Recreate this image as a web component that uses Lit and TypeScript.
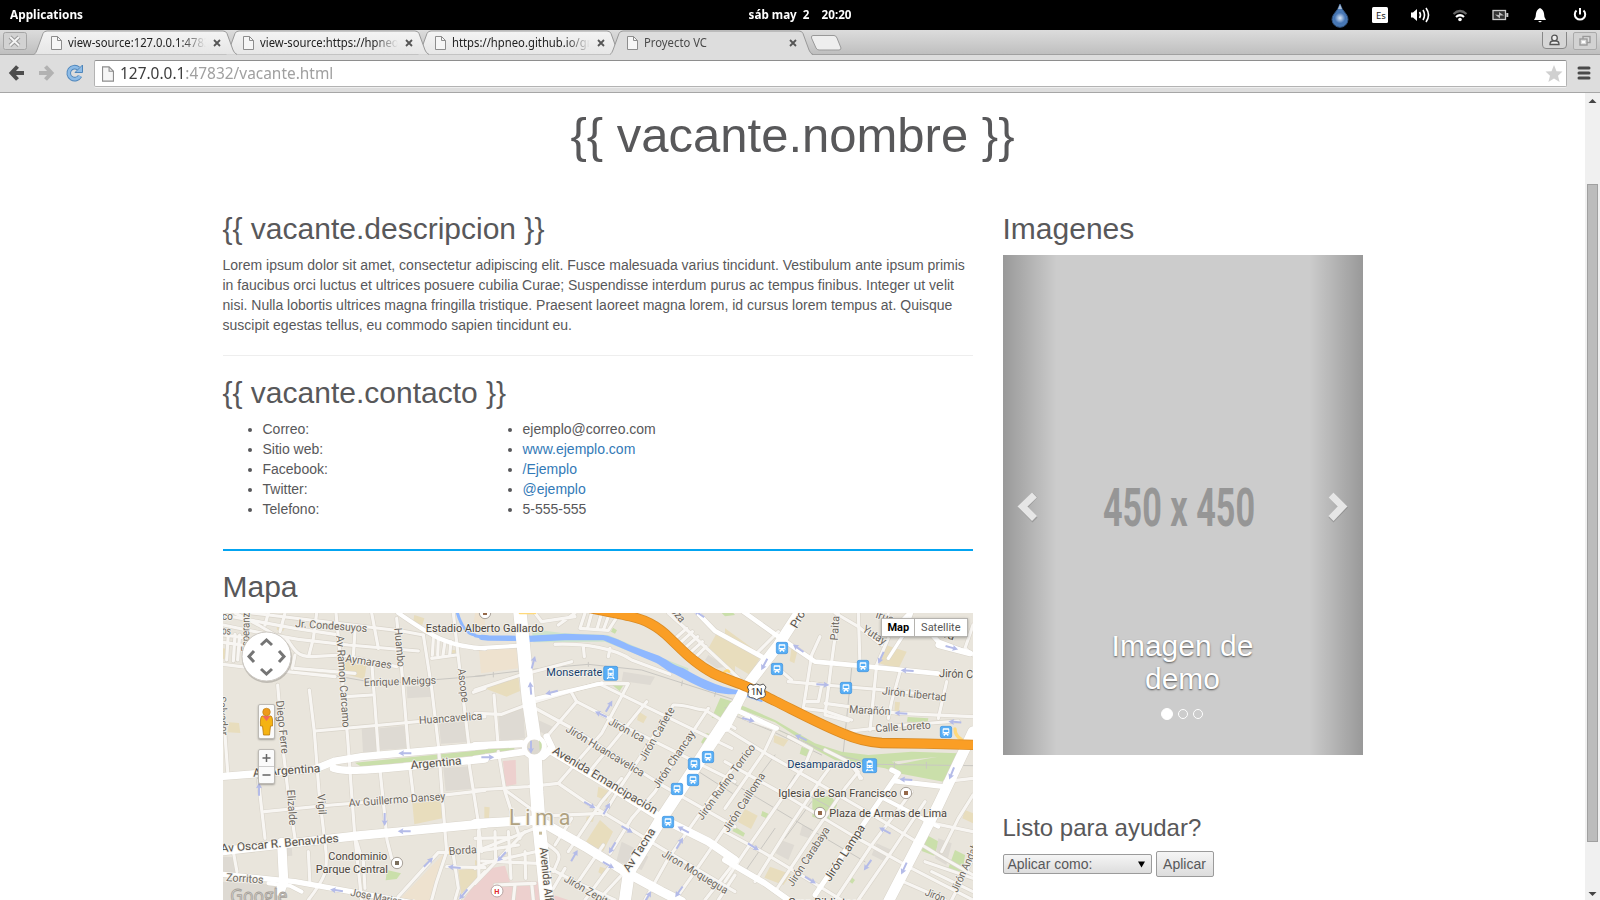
import { LitElement, html, svg, css } from "lit";
import { customElement } from "lit/decorators.js";

/* ---------- map data: three horizontal sections sharing one scale ---------- */
const OFF: Record<string, number> = { a: -24, b: 756, c: 1506 };
type Line = [string, string, number?];

const areas: [string, string, string][] = [
  ["a", "#dedad3", "M575,245 L648,240 L652,275 L577,280Z M440,370 L482,368 L486,440 L444,442Z M492,370 L568,362 L574,430 L496,435Z M672,355 L748,348 L755,412 L678,416Z M685,490 L760,484 L768,552 L692,558Z M24,755 L60,757 L66,806 L24,800Z M24,830 L200,840 L200,885 L24,885Z M205,720 L230,718 L232,752 L207,754Z"],
  ["a", "#e8ddbd", "M383,165 L455,180 L448,222 L378,205Z M42,352 L72,354 L76,384 L38,382Z M592,595 L680,585 L682,640 L598,658Z M24,130 L36,132 L36,160 L24,162Z M598,30 L628,40 L622,60 L594,52Z M185,62 L210,66 L205,78 L186,75Z M730,795 L785,790 L786,830 L740,880Z M708,134 L722,136 L722,150 L708,148Z"],
  ["a", "#eee2cf", "M687,745 L665,830 L645,885 L552,885 L600,835Z M780,24 L810,24 L810,90 L775,60Z"],
  ["a", "#cadfaa", "M420,473 L810,434 L810,449 L440,486Z M516,795 L558,805 L545,822 L512,826Z"],
  ["a", "#edd0ce", "M810,815 L770,850 L745,885 L810,885Z"],
  ["b", "#eee2cf", "M12,135 L124,130 L130,190 L18,205Z"],
  ["b", "#e8ddbd", "M28,250 L130,215 L135,258 L95,275Z M375,645 L414,680 L385,738 L332,712Z M335,635 L358,630 L354,650 L333,652Z M370,545 L408,560 L395,588 L366,575Z M28,605 L44,607 L42,640 L28,640Z M725,85 L780,110 L780,210 L700,130Z M492,320 L516,335 L505,355 L486,345Z M375,785 L398,792 L388,812 L370,802Z M0,765 L12,770 L8,835 L0,840Z"],
  ["b", "#dedad3", "M70,335 L145,310 L150,400 L76,408Z M190,345 L240,368 L222,395 L192,378Z M440,710 L480,730 L520,755 L500,795 L424,768Z M445,200 L540,215 L526,240 L440,228Z M700,150 L755,185 L725,190 L690,165Z"],
  ["b", "#edd0ce", "M84,468 L122,465 L124,538 L90,544Z M45,790 L90,782 L105,830 L190,830 L205,885 L0,885 L0,835Z M235,870 L280,885 L235,885Z"],
  ["b", "#cadfaa", "M412,240 L448,236 L434,258Z M736,278 L775,290 L745,345 L710,338Z M695,384 L710,390 L690,422 L678,412Z M0,435 L118,428 L118,440 L0,447Z M190,405 L204,407 L206,432 L192,436Z M740,24 L775,24 L780,30 L750,34Z M414,68 L426,76 L420,86 L408,80Z"],
  ["b", "#cfe3cd", "M170,72 L260,84 L400,90 L560,158 L640,190 L640,210 L390,110 L175,112Z"],
  ["c", "#e8ddbd", "M0,70 L110,150 L75,210 L0,165Z M475,118 L545,140 L520,192 L462,175Z M200,125 L218,135 L208,175 L194,168Z M60,612 L98,632 L78,672 L38,650Z M135,785 L198,808 L175,840 L118,818Z M148,390 L190,405 L176,425 L146,412Z M510,290 L525,292 L520,332 L508,330Z M720,615 L744,625 L744,655 L712,640Z"],
  ["c", "#cadfaa", "M0,285 L60,305 L150,345 L270,415 L350,440 L430,450 L560,440 L700,445 L690,500 L655,530 L520,505 L480,490 L330,465 L180,385 L60,335 L0,312Z M262,580 L318,572 L336,600 L310,650 L262,635Z M605,690 L642,710 L628,752 L590,738Z M690,735 L720,750 L712,808 L670,790Z M548,336 L610,340 L608,352 L546,350Z M230,425 L254,434 L248,456 L224,446Z M112,618 L130,626 L124,640 L108,632Z M30,665 L60,685 L55,695 L22,678Z M378,815 L390,825 L382,836 L374,830Z"],
  ["c", "#dedad3", "M640,700 L680,715 L664,780 L630,760Z M168,705 L208,720 L190,765 L152,745Z M232,660 L262,672 L252,700 L224,690Z M455,715 L500,735 L480,770 L440,750Z"],
  ["c", "#e9e5dc", "M60,318 L150,352 L260,425 L200,392 L60,335Z M500,470 L640,455 L600,462 L520,478Z"],
];

const minor: Line[] = [
  ["a", "M24,60 L130,82 L250,103 L400,120 L610,138"], ["a", "M24,30 L130,50 L240,70 L360,88"], ["a", "M110,24 L560,78 L625,90"],
  ["a", "M24,112 L80,120 M40,85 L35,165 M60,88 L55,168 M74,90 L68,165 M24,90 L90,98"],
  ["a", "M24,178 L120,190 L360,215 M240,190 L420,205"], ["a", "M215,100 C240,140 250,155 290,155 L380,150 L545,185"],
  ["a", "M60,24 L130,60 L215,110 M160,24 L150,60 M210,24 L195,80 M305,24 L295,100 L282,150 M240,150 L232,190"],
  ["a", "M188,240 L205,440 L220,570 L240,700"], ["a", "M283,255 L298,380 L312,560 L333,740 C338,800 330,820 280,885 M280,740 L285,840"],
  ["a", "M363,24 L380,200 L398,400 L408,540 L420,700 L440,885 M425,710 L440,760 M420,80 L415,150"],
  ["a", "M470,170 L482,330 L490,440"], ["a", "M495,495 L508,620 L516,705 L530,760"],
  ["a", "M470,24 L490,130 M545,40 L558,170 L580,430"], ["a", "M585,490 L595,572"],
  ["a", "M625,90 L650,250 L670,420 L690,680 L695,740 L665,830 L650,885"],
  ["a", "M715,24 L735,200 L762,425"], ["a", "M762,475 L788,640 L800,740"], ["a", "M775,262 L810,250 M650,160 L725,150 M655,100 L652,150 M670,105 L668,150 M690,110 L684,150 M708,110 L704,150"],
  ["a", "M30,390 L38,500"], ["a", "M130,525 L150,700"], ["a", "M300,378 L500,360 L660,345 L810,335"], ["a", "M392,275 L470,270"],
  ["a", "M148,620 L350,600 L600,580 L810,556"], ["a", "M445,770 L450,850 M55,740 L66,800"],
  ["a", "M550,875 L670,742 L700,742 M695,785 L810,788 M715,750 L730,850 L720,885 M735,880 L810,800"],
  ["b", "M0,790 L40,772 L205,735 M0,740 L180,670 M10,678 L12,820 M60,680 L62,770 M100,680 L108,820 M150,740 L152,820"],
  ["b", "M0,700 L110,698 M0,740 L130,720 M0,835 L150,680 M20,768 L190,775"],
  ["b", "M0,325 L80,328 L180,290 L370,235 L390,245 L770,430"], ["b", "M0,255 L130,212 L290,170 M240,118 C330,115 420,130 470,165 L585,208 M325,125 L328,155 M405,130 L400,155"],
  ["b", "M57,270 L68,405 M70,440 L90,560 L135,700"], ["b", "M0,555 L160,545 L250,535"],
  ["b", "M185,312 L300,375 L560,540 L780,665"], ["b", "M288,260 L305,290 L480,380 L780,530"],
  ["b", "M215,395 L305,290 M250,535 L380,385 L460,236 L380,235"], ["b", "M335,510 L515,290"],
  ["b", "M385,630 L440,540 L500,450 L595,300 C640,298 660,315 690,315 L780,370"], ["b", "M405,745 L470,640 L540,560 L640,400 L700,310"],
  ["b", "M250,535 L330,590 L430,650 L560,730 L780,860"], ["b", "M90,555 L180,620 L225,632 L380,625"],
  ["b", "M280,740 L380,590 L440,520"], ["b", "M240,720 L290,640 M310,830 L385,720 M200,705 C230,730 260,740 250,765 L235,800"],
  ["b", "M205,780 L300,830 L420,885 M330,885 L400,790 M235,850 L270,790 M370,885 L440,810"],
  ["b", "M510,885 L580,760 L700,590 L780,480"], ["b", "M600,885 L660,800 L780,625 M690,885 L780,770 M730,885 L780,810"],
  ["b", "M180,24 L200,50 L300,35 M300,24 L250,60 M330,24 L315,70 L400,76 L430,30 M350,24 L338,68 M378,30 L366,72 M400,35 L385,75"],
  ["b", "M580,24 L620,60 L800,228 M635,70 L595,105 M652,80 L608,120 M668,95 L625,133 M682,110 L642,146 M693,125 L660,158"],
  ["b", "M120,840 L115,885 M170,835 L175,885 M60,840 L180,835"],
  ["c", "M0,370 L130,450 L280,535 L460,640 L640,750 L744,810"], ["c", "M0,470 L180,570 L380,690 L560,790 L744,885"],
  ["c", "M190,395 L260,432 L240,480 L60,740 L0,830 M60,340 L150,372 L118,440 L0,610"], ["c", "M300,435 L370,470 L410,520 M390,480 L405,520"],
  ["c", "M0,680 L120,745 L260,830 L350,885"], ["c", "M90,830 L190,670 L290,520 L320,480"],
  ["c", "M150,860 L270,680 L360,550 L400,500"], ["c", "M330,885 L440,720 L560,560"], ["c", "M400,885 L500,740 L600,590"],
  ["c", "M535,830 L660,885 M600,770 L744,820 M744,570 L700,640 L650,740"], ["c", "M620,800 L744,860 M680,885 L744,760"],
  ["c", "M660,530 L744,520 M600,650 L744,680"],
  ["c", "M285,95 L260,150 L235,310 L300,318 L380,345"], ["c", "M340,24 L320,170 L300,330 L370,348"], ["c", "M190,230 L300,240 L480,255 L660,275"],
  ["c", "M165,195 L200,225 M260,235 L290,240 L280,290 L240,290"], ["c", "M400,24 L405,180 M490,100 L455,180 L435,375"],
  ["c", "M525,200 L500,290 L490,340"], ["c", "M665,230 L640,340"], ["c", "M300,295 L520,325 L744,335"], ["c", "M360,380 L540,360 L700,348"],
  ["c", "M330,24 L400,65 L470,120 M490,24 L480,60 L600,90 M744,60 L720,130 L744,150"],
  ["c", "M100,140 L160,80"],
];

const major: Line[] = [
  ["a", "M24,514 L300,492 L360,468 L440,455 L810,422", 22], ["a", "M355,490 C400,504 450,496 810,462", 22],
  ["a", "M24,738 L430,692 L810,656", 26], ["a", "M200,712 L206,830 L195,860", 28], ["a", "M24,808 L240,830 L420,862 L600,895", 16],
  ["a", "M550,24 C640,85 690,125 810,130", 13], ["a", "M160,835 L225,842 L260,860", 12],
  ["b", "M0,130 L130,122", 12], ["b", "M0,422 L140,416", 22], ["b", "M0,462 L150,440", 20],
  ["b", "M135,24 L145,120 L160,280 L178,400 L185,560 L192,660 L215,885", 40], ["b", "M0,656 L190,645 L330,725 L450,800 L560,860 L620,890", 28],
  ["b", "M225,435 L400,540 L560,640 L700,710 L780,765", 24], ["b", "M215,395 L232,430 L205,455", 20],
  ["b", "M450,885 L462,800 L560,640 L780,305", 36], ["b", "M185,280 L380,235", 12],
  ["b", "M660,16 L720,78 L860,155", 14],
  ["c", "M0,365 L60,250 L160,120 L222,24", 32], ["c", "M55,20 L160,95 L270,170 L400,182 L640,206", 14],
  ["c", "M640,120 L735,145", 18],
  ["c", "M744,380 L640,600 L490,890", 32], ["c", "M270,870 L400,680 L520,505 L500,495", 15], ["c", "M510,528 L660,545", 15],
  ["c", "M0,765 L120,835 L190,885", 18], ["c", "M475,580 L640,665", 12], ["c", "M40,318 L155,370", 14],
  ["c", "M555,24 L530,50 M600,65 L640,110 L720,140", 14], ["c", "M560,24 L535,90 L490,160", 10],
];

type Label = [string, number, number, number, number, string, string?];
const labels: Label[] = [
  ["a", 240, 66, 4, 216, "Jr. Condesuyos"], ["a", 390, 170, 9, 140, "Aymaraes"], ["a", 364, 92, 86, 277, "Av Ramon Carcamo"],
  ["a", 538, 70, 85, 117, "Huambo"], ["a", 728, 192, 83, 102, "Ascope"], ["a", 447, 244, -2, 217, "Enrique Meiggs"],
  ["a", 613, 357, -4, 190, "Huancavelica"], ["a", 183, 288, 84, 160, "Diego Ferre"], ["a", 216, 555, 86, 107, "Elizalde"],
  ["a", 307, 568, 86, 62, "Vigil"], ["a", 588, 492, -5, 153, "Argentina", "dark"], ["a", 115, 515, -4, 202, "Av Argentina", "dark"],
  ["a", 402, 605, -4, 290, "Av Guillermo Dansey"], ["a", 18, 742, -5, 355, "Av Oscar R. Benavides", "dark"],
  ["a", 340, 764, 0, 177, "Condominio", "poi"], ["a", 302, 803, 0, 217, "Parque Central", "poi"], ["a", 702, 750, -4, 84, "Borda"],
  ["a", 33, 828, 4, 112, "Zorritos"], ["a", 405, 872, 11, 240, "Jose Mariano Arce"], ["a", 632, 80, 0, 354, "Estadio Alberto Gallardo", "poi"],
  ["a", 102, 140, -89, 132, "Esperanza"], ["a", 20, 44, 2, 33, "co"], ["a", 20, 88, 2, 27, "os"], ["a", 10, 275, 87, 116, "Salvador"],
  ["b", 214, 214, 0, 168, "Monserrate", "transit"], ["b", 398, 357, 28, 118, "Jirón Ica"], ["b", 270, 378, 31, 268, "Jirón Huancavelica"],
  ["b", 230, 443, 31, 360, "Avenida Emancipación", "dark"], ["b", 510, 470, -60, 180, "Jirón Cañete"], ["b", 550, 552, -56, 200, "Jirón Chancay"],
  ["b", 682, 647, -54, 272, "Jirón Rufino Torrico"], ["b", 462, 803, -57, 148, "Av Tacna", "dark"], ["b", 558, 752, 31, 225, "Jiron Moquegua"],
  ["b", 265, 828, 30, 160, "Jirón Zepita"], ["b", 194, 728, 84, 235, "Avenida Alfonso", "dark"], ["b", 586, 18, 50, 48, "oza"],
  ["b", 760, 684, -57, 205, "Jirón Cailloma"], ["c", 215, 72, -60, 122, "Prolong", "dark"], ["c", 338, 107, -86, 74, "Paita"],
  ["c", 410, 78, 33, 78, "Yutay"], ["c", 642, 216, 2, 172, "Jirón Cusco", "dark"], ["c", 470, 268, 6, 194, "Jirón Libertad"],
  ["c", 372, 324, 3, 124, "Marañón"], ["c", 452, 382, -4, 166, "Calle Loreto"], ["c", 187, 490, 0, 222, "Desamparados", "transit"],
  ["c", 160, 575, 0, 356, "Iglesia de San Francisco", "poi"], ["c", 313, 635, 0, 353, "Plaza de Armas de Lima", "poi"],
  ["c", 203, 847, -57, 206, "Jirón Carabaya"], ["c", 315, 832, -57, 196, "Jirón Lampa", "dark"], ["c", 697, 864, -65, 240, "Jirón Andahuaylas"],
  ["c", 190, 904, 0, 225, "Gran Biblioteca", "poi"], ["c", 598, 870, 22, 62, "Jirón"], ["c", 450, 38, 18, 55, "irus"], ["c", 655, 96, 20, 32, "ra", "dark"],
];

const arrows: [string, number, number, number][] = [
  ["a", 570, 445, 180], ["a", 132, 553, -90], ["a", 509, 643, 90], ["a", 568, 679, 180], ["a", 640, 772, -45], ["a", 365, 856, 188], ["a", 718, 787, 185], ["a", 745, 868, 130],
  ["b", 175, 172, -75], ["b", 167, 250, -95], ["b", 230, 262, 165], ["b", 378, 328, 205], ["b", 402, 304, -60], ["b", 168, 426, 90], ["b", 38, 457, 0],
  ["b", 344, 600, 30], ["b", 395, 611, -60], ["b", 456, 673, 30], ["b", 412, 728, 120], ["b", 298, 752, -60], ["b", 80, 755, 132], ["b", 400, 780, 30],
  ["b", 625, 674, 208], ["b", 614, 715, -60], ["b", 612, 860, 125], ["b", 518, 876, -60], ["b", 672, 26, 215],
  ["c", 118, 178, 118], ["c", 220, 130, 215], ["c", 468, 158, 115], ["c", 547, 197, 183], ["c", 293, 239, 3], ["c", 528, 325, 183], ["c", 690, 351, 185],
  ["c", 70, 344, 15], ["c", 228, 398, 205], ["c", 543, 524, 183], ["c", 680, 505, 112], ["c", 480, 677, 208], ["c", 428, 780, 125], ["c", 537, 790, 115],
  ["c", 85, 725, 32], ["c", 256, 825, 32], ["c", 680, 128, 15],
];
const buses: [string, number, number][] = [
  ["b", 699, 456], ["b", 657, 477], ["b", 654, 525], ["b", 606, 552], ["b", 579, 651],
  ["c", 171, 129], ["c", 156, 192], ["c", 414, 183], ["c", 363, 249], ["c", 663, 381],
];
const trains: [string, number, number][] = [["b", 407, 205], ["c", 434, 482]];
const pois: [string, number, number, string][] = [["a", 546, 774, "#7b6f5d"], ["b", 30, 24, "#95694a"], ["c", 543, 564, "#95694a"], ["c", 285, 624, "#95694a"]];
const highway =
  "M340,8 C400,20 430,26 465,34 C490,40 508,46 525,55 C550,68 565,80 585,100 C610,124 630,146 655,165 C675,181 692,193 715,205 C745,220 790,234 815,245 C850,262 880,278 900,288 C990,333 1050,365 1110,388 C1150,406 1180,411 1220,414 L1350,416 L1520,420";
const at = (k: string) => `translate(${OFF[k]} 0)`;

@customElement("city-map")
export class CityMap extends LitElement {
  static styles = css`
    :host { display: block; height: 287px; position: relative; overflow: hidden; background: #e9e5dc; }
    svg { display: block; }
    .map { width: 750px; height: 287px; }
    .line { fill: none; stroke-linecap: round; stroke-linejoin: round; }
    text { font-family: Roboto, sans-serif; font-size: 33px; fill: #6d675e; stroke: #f4f2ed; stroke-width: 5px; paint-order: stroke; stroke-linejoin: round; }
    text.dark { fill: #565048; font-size: 35px; }
    text.poi { fill: #4b443b; font-size: 34px; }
    text.transit { fill: #153e6b; font-size: 34px; }
    text.city { fill: #b0a281; font-size: 64px; font-weight: 400; stroke-width: 7px; }
    text.logo { font-size: 62px; fill: #e8e6e2; stroke: #a5a099; stroke-width: 3px; paint-order: normal; font-family: "Open Sans", sans-serif; }
    text.shield { font-size: 27px; fill: #222; stroke: none; }
    text.hosp { font-size: 22px; font-weight: 700; fill: #e02c2c; stroke: none; }
    .pan { position: absolute; left: 18px; top: 18px; width: 52px; height: 52px; }
    .types { position: absolute; right: 5px; top: 5px; display: flex; font: 11px/17px Roboto, sans-serif; background: #fff; border: 1px solid #b5b3af; box-shadow: 0 1px 3px rgba(0,0,0,.3); }
    .types span { padding: 0 6px; color: #555; }
    .types .on { color: #000; font-weight: 700; border-right: 1px solid #b5b3af; padding: 0 5px; }
    .box { position: absolute; left: 35px; width: 15px; background: #fbfbfb; border: 1px solid #bdbab5; border-radius: 2px; box-shadow: 0 1px 2px rgba(0,0,0,.3); }
    .man { top: 91px; height: 33px; }
    .zoom { top: 136px; height: 33px; }
  `;
  render() {
    return html`
      <svg class="map" viewBox="0 24 2250 861" preserveAspectRatio="none">
        ${areas.map(([k, c, d]) => svg`<path transform=${at(k)} fill=${c} d=${d}></path>`)}
        <g class="line" stroke="#c9c7c2" stroke-width="3">
          <path transform=${at("a")} d="M360,212 L450,228 L560,232 L810,212"></path>
          <path transform=${at("b")} d="M0,214 L200,190 L340,178 L500,195 L640,240 L780,285 M55,202 V216 M340,172 V184 M622,228 L620,242 M722,260 L719,274"></path>
          <path transform=${at("c")} d="M0,308 L140,365 L300,440 L450,478 L744,482 M0,320 L140,378 L290,450 M380,190 L355,440 M60,570 L150,450 M130,640 L210,510 M0,520 L200,640 L420,770 M180,700 L260,590 M60,800 L150,670 M230,560 L340,620 M508,472 V490 M604,472 V490"></path>
          <path transform=${at("b")} d="M640,480 L780,570"></path>
        </g>
        <g class="line" stroke="#d9d4ca" stroke-width="13">${minor.map(([k, d]) => svg`<path transform=${at(k)} d=${d}></path>`)}</g>
        <g class="line" stroke="#d9d4ca">${major.map(([k, d, w]) => svg`<path transform=${at(k)} stroke-width=${(w ?? 14) + 3} d=${d}></path>`)}
          <circle cx="934" cy="426" r="38" stroke-width="3"></circle></g>
        <g class="line" stroke="#f8f6f3" stroke-width="9.5">${minor.map(([k, d]) => svg`<path transform=${at(k)} d=${d}></path>`)}</g>
        <path transform=${at("b")} fill="#8fb8ff" d="M160,92 L270,86 L385,90 C420,96 440,110 470,122 L540,148 C575,160 590,180 625,190 C670,215 720,245 800,258 L800,268 L760,268 C710,262 690,254 650,234 L600,208 C570,196 560,180 535,170 L460,138 L385,106 L270,106 L160,111Z"></path>
        <g class="line" stroke="#8fb8ff">
          <path transform=${at("b")} stroke-width="9" d="M-54,20 C-44,56 -30,86 0,90 M0,92 L20,96"></path>
          <path transform=${at("b")} stroke-width="16" d="M20,97 L40,99 L125,100"></path>
          <path transform=${at("c")} stroke-width="6" d="M0,262 L40,264 L110,288"></path>
        </g>
        <g class="line" stroke="#ffffff">${major.map(([k, d, w]) => svg`<path transform=${at(k)} stroke-width=${w ?? 14} d=${d}></path>`)}</g>
        <circle cx="934" cy="426" r="30" fill="#dcd8cf" stroke="#fff" stroke-width="15"></circle>
        <path transform=${at("b")} fill="#cadfaa" d="M192,406 Q208,420 194,438Z"></path>
        <g class="line" stroke="#ffd97a" stroke-width="10"><path transform=${at("c")} d="M690,372 Q690,392 710,404"></path><path transform=${at("b")} stroke-width="8" d="M135,24 L180,24 M745,205 Q755,192 762,200"></path></g>
        <path class="line" stroke="#d98b25" stroke-width="31" transform=${at("b")} d=${highway}></path>
        <path class="line" stroke="#fa9e25" stroke-width="26" transform=${at("b")} d=${highway}></path>
        ${arrows.map(([k, x, y, r]) => svg`<path fill="#b4bbe8" transform="translate(${OFF[k] + x} ${y}) rotate(${r})" d="M-19,-3 L5,-3 L3,-9 L20,0 L3,9 L5,3 L-19,3Z"></path>`)}
        ${labels.map(([k, x, y, r, w, t, c]) => svg`<text class=${c ?? ""} textLength=${w} lengthAdjust="spacingAndGlyphs" transform="translate(${OFF[k] + x} ${y}) rotate(${r})">${t}</text>`)}
        <text class="city" x="858" y="661" textLength="184">Lima</text>
        <rect x="948" y="680" width="9" height="9" fill="#c8bc9c"></rect>
        <text class="logo" x="22" y="893" textLength="172" lengthAdjust="spacingAndGlyphs">Google</text>
        ${buses.map(([k, x, y]) => svg`<g transform="translate(${OFF[k] + x} ${y})"><rect x="-17" y="-17" width="34" height="34" rx="5" fill="#56aef6" stroke="#3c8fdd" stroke-width="2"></rect><path fill="#fff" d="M-7,-11 H7 Q10,-11 10,-7 V7 H7 V11 H3 V8 H-3 V11 H-7 V7 H-10 V-7 Q-10,-11 -7,-11Z"></path><path fill="#56aef6" d="M-7,-7 H7 V0 H-7Z M-8,3 h3 v3 h-3z M5,3 h3 v3 h-3z"></path></g>`)}
        ${trains.map(([k, x, y]) => svg`<g transform="translate(${OFF[k] + x} ${y})"><rect x="-21" y="-21" width="42" height="42" rx="5" fill="#56aef6" stroke="#3c8fdd" stroke-width="2"></rect><path fill="#fff" d="M-5,-16 H5 V-13 H9 V7 H-9 V-13 H-5Z M-8,9 H-4 L-6,12 H6 L4,9 H8 L12,17 H8 L7,15 H-7 L-8,17 H-12Z"></path><path fill="#56aef6" d="M-6,-9 H6 V-2 H-6Z M-6,1 h3 v3 h-3z M3,1 h3 v3 h-3z"></path></g>`)}
        ${pois.map(([k, x, y, c]) => svg`<g transform="translate(${OFF[k] + x} ${y})"><circle r="17" fill="#fff" stroke="#a9a29a" stroke-width="3"></circle><rect x="-6" y="-6" width="12" height="12" fill=${c}></rect></g>`)}
        <g transform="translate(822 858)"><circle r="18" fill="#fff" stroke="#b9a5a3" stroke-width="3"></circle><text class="hosp" x="-8" y="8">H</text></g>
        <g transform="translate(1601 260)"><path fill="#fff" stroke="#555" stroke-width="3" d="M-20,-23 Q-10,-16 0,-23 Q10,-16 20,-23 L28,-14 Q20,-3 26,6 Q28,18 10,19 L0,24 L-10,19 Q-28,18 -26,6 Q-20,-3 -28,-14Z"></path><text class="shield" x="-17" y="11">1N</text></g>
      </svg>
      <svg class="pan" viewBox="0 0 52 52"><circle cx="26" cy="27" r="25" fill="#8b8780" opacity=".45"></circle><circle cx="25.500" cy="25.500" r="24.500" fill="#fff" stroke="#ccc8c2"></circle>
        <path fill="none" stroke="#757575" stroke-width="3" d="M20,14 L25.500,9 L31,14 M20,38 L25.500,43 L31,38 M13,20 L8,25.500 L13,31 M38,20 L43,25.500 L38,31"></path></svg>
      <div class="box man"><svg width="15" height="33" viewBox="0 0 15 33"><path fill="#f5b312" stroke="#b97a0c" stroke-width=".8" d="M3,11 H12 Q14,12 13.500,21 H11.500 L10.500,30 H4.500 L3.500,21 H1.500 Q1,12 3,11Z"></path><path fill="#f0685c" d="M3.500,11 H11.500 L7.500,16Z"></path><circle cx="7.500" cy="7" r="3.800" fill="#ee9a1b" stroke="#b97a0c" stroke-width=".6"></circle></svg></div>
      <div class="box zoom"><svg width="15" height="33" viewBox="0 0 15 33"><path stroke="#666" stroke-width="1.500" d="M3.500,8 H11.500 M7.500,4 V12 M3.500,25 H11.500"></path><path stroke="#ccc" d="M0,16.500 H15"></path></svg></div>
      <div class="types"><span class="on">Map</span><span>Satellite</span></div>`;
  }
}

const docIcon = svg`<path fill="#f6f6f6" stroke="#8d8d8d" d="M.5,.5 H6.500 L10.500,4.500 V13.500 H.5Z"></path><path fill="none" stroke="#8d8d8d" d="M6.500,.5 V4.500 H10.500"></path>`;

@customElement("app-root")
export class AppRoot extends LitElement {
  static styles = css`
    :host { display: flex; flex-direction: column; width: 1600px; height: 900px; overflow: hidden; background: #fff; font: 14px/20px "Liberation Sans", Arial, sans-serif; color: #58585a; }
    * { box-sizing: border-box; }
    svg { display: block; flex: none; }
    .panel { height: 30px; flex: none; background: #000; color: #fff; display: grid; grid-template-columns: 1fr auto 1fr; align-items: center; font: 700 12px/30px "Noto Sans", sans-serif; padding: 0 10px; }
    .panel span { white-space: pre; display: inline-block; transform: scaleX(.97); }
    .panel .apps { transform-origin: left; justify-self: start; transform: scaleX(.985); }
    .tray { justify-self: end; }
    .strip { height: 25px; flex: none; display: flex; background: linear-gradient(#dcdcdc, #bfbfbf); border-bottom: 1px solid #a0a0a0; position: relative; }
    .winx { margin: 2px 0 0 3px; }
    .tabs { display: flex; margin-left: 7px; height: 26px; }
    .tab { width: 203px; height: 25px; margin-right: -11px; display: grid; position: relative; }
    .tab > * { grid-area: 1 / 1; }
    .t0 { z-index: 4; } .t1 { z-index: 3; } .t2 { z-index: 2; } .t3 { z-index: 5; }
    .inner { display: flex; align-items: center; padding: 0 20px 0 17px; font: 12px/22px "Noto Sans", sans-serif; color: #222; }
    .t3 .inner { color: #4a4a4a; }
    .name { margin-left: 6px; width: 138px; white-space: nowrap; overflow: hidden; }
    .name b { font-weight: 400; display: inline-block; transform: scaleX(.94); transform-origin: left; }
    .fade { -webkit-mask-image: linear-gradient(90deg, #000 82%, transparent); }
    .close { margin-left: 7px; }
    .newtab { margin: 4px 0 0 8px; position: relative; z-index: 6; }
    .right { margin-left: auto; display: flex; gap: 6px; padding: 2px 3px 0 0; }
    .toolbar { height: 38px; flex: none; background: #dddddd; border-bottom: 1px solid #a6a6a6; display: flex; padding: 5px 9px 0 8px; }
    .nav { margin-top: 4px; }
    .omni { margin-left: 11px; width: 1474px; height: 27px; background: #fff; border: 1px solid #b3b3b3; border-top: 1px solid #8e8e8e; border-radius: 2px; display: flex; align-items: center; padding: 0 3px 0 7px; box-shadow: 0 1px 0 #eee; }
    .url { margin-left: 6px; flex: 1; font: 16px/24px "Noto Sans", sans-serif; color: #a0a0a0; padding-bottom: 2px; }
    .url span { display: inline-block; transform: scaleX(.964); transform-origin: left; }
    .url i { font-style: normal; color: #3c3c3c; }
    .burger { margin: 6px 0 0 10px; }
    .view { flex: 1; display: flex; min-height: 0; }
    .page { width: 1585px; height: 807px; overflow: hidden; padding-top: 15px; }
    h1, h2, h3, p, ul { margin: 0; font-weight: 400; }
    h1 { font-size: 49px; line-height: 54px; text-align: center; margin-bottom: 50px; }
    h2 { font-size: 30px; line-height: 33px; margin-bottom: 10px; }
    h3 { font-size: 24px; line-height: 26px; margin: 60px 0 10px; }
    .cols { width: 1140px; margin: 0 auto; display: grid; grid-template-columns: 750px 360px; column-gap: 30px; }
    .rule { height: 1px; background: #eee; margin: 20px 0; }
    .blue { height: 2px; background: #03a4f1; margin: 30px 0 19px; }
    .contact { display: grid; grid-template-columns: 260px 1fr; }
    ul { padding-left: 40px; }
    a { color: #337ab7; }
    .slider { height: 500px; background: linear-gradient(90deg, rgba(0,0,0,.25), rgba(0,0,0,0) 15%, rgba(0,0,0,0) 85%, rgba(0,0,0,.25)), #ccc; display: grid; }
    .slider > * { grid-area: 1 / 1; }
    .size { font: 700 54px Roboto, sans-serif; fill: #969696; }
    .caption { justify-self: center; align-self: start; width: 216px; padding: 374px 20px 0; text-align: center; color: #fff; font-size: 30px; line-height: 33px; text-shadow: 0 1px 2px rgba(0,0,0,.6); }
    .dots { display: flex; align-items: center; justify-content: center; gap: 5px; align-self: start; padding: 453px 2px 0 0; }
    .dot { width: 10px; height: 10px; border: 1px solid #fff; border-radius: 50%; }
    .dot.on { width: 12px; height: 12px; background: #fff; }
    .form { display: flex; align-items: center; gap: 4px; }
    .select, .btn { border: 1px solid #9b9b9b; background: linear-gradient(#f5f5f5, #dddddd); border-radius: 2px; color: #58585a; white-space: nowrap; }
    .select { width: 149px; height: 20px; display: flex; justify-content: space-between; align-items: center; padding: 0 6px 0 4px; line-height: 18px; }
    .btn { width: 58px; height: 26px; text-align: center; line-height: 24px; }
    .bar { width: 15px; background: #f0f0f0; display: flex; flex-direction: column; align-items: center; }
    .thumb { width: 11px; height: 658px; margin-top: 79px; background: #bcbcbc; border: 1px solid #a0a0a0; }
    .down { margin-top: 49px; }
  `;
  render() {
    const tabs = ["view-source:127.0.0.1:47832", "view-source:https://hpneo.g", "https://hpneo.github.io/gma", "Proyecto VC"];
    return html`
      <div class="panel"><span class="apps">Applications</span><span>sáb may  2    20:20</span>
        <svg class="tray" width="260" height="30" viewBox="1330 0 260 30">
          <defs><radialGradient id="w"><stop offset="0" stop-color="#dbe8f5"></stop><stop offset="1" stop-color="#3f70b3"></stop></radialGradient></defs>
          <path fill="#4878b4" stroke="#31527e" d="M1340,4 Q1341.500,9 1346,14 A8,8 0 1 1 1334,14 Q1338.500,9 1340,4Z"></path><circle cx="1340" cy="18" r="5.500" fill="url(#w)"></circle><path fill="#a9bcd4" d="M1340,4 L1342,9 H1338Z"></path>
          <rect x="1372" y="7" width="16" height="16" rx="1.500" fill="#fff"></rect><text x="1376" y="19" font-size="9.500" font-weight="400" fill="#222">Es</text>
          <path fill="#fff" d="M1411,12.500 H1413 L1417,9 V21 L1413,17.500 H1411Z"></path><path fill="none" stroke="#fff" stroke-width="1.600" d="M1419.500,12 Q1421.500,15 1419.500,18 M1423,10 Q1426,15 1423,20 M1426,8 Q1431,15 1426,22"></path>
          <g fill="none" stroke-width="2.200"><path stroke="#666" d="M1453.500,14 Q1460,8 1466.500,14"></path><path stroke="#fff" d="M1456,17 Q1460,13.500 1464,17"></path></g><circle cx="1460" cy="19.500" r="1.800" fill="#fff"></circle>
          <rect x="1493" y="10.500" width="12.500" height="9" fill="#333" stroke="#ccc" stroke-width="1.300"></rect><path stroke="#ccc" stroke-width="2" d="M1507.300,13 V17"></path><path fill="#bbb" d="M1495,14.500 L1499,15 V12 L1504,15.500 L1500,15.500 V18.500Z"></path>
          <path fill="#fff" d="M1534,20 Q1536,18 1536,13.500 Q1536.500,9.500 1540,8 Q1543.500,9.500 1544,13.500 Q1544,18 1546,20Z M1538,21 H1542 L1540,22.500Z"></path>
          <path fill="none" stroke="#fff" stroke-width="2" d="M1576.500,10.500 A5.200,5.200 0 1 0 1583.500,10.500 M1580,8 V14.500"></path>
        </svg>
      </div>
      <div class="strip">
        <svg class="winx" width="24" height="19" viewBox="0 0 24 19"><rect x=".5" y=".5" width="23" height="17" rx="2" fill="#d2d2d2" stroke="#a5a5a5"></rect><path stroke="#999" stroke-width="4" d="M7,5 L16,13.500 M16,5 L7,13.500"></path><path stroke="#f4f4f4" stroke-width="2" d="M7,5 L16,13.500 M16,5 L7,13.500"></path></svg>
        <div class="tabs">
          ${tabs.map((t, i) => html`<div class="tab t${i}">
            <svg width="203" height="26" viewBox="0 0 203 26"><defs><linearGradient id="g" x2="0" y2="1"><stop stop-color="#f4f4f4"></stop><stop offset="1" stop-color="#e6e6e6"></stop></linearGradient></defs>
              <path fill=${i === 3 ? "#dddddd" : "url(#g)"} d="M0,${i === 3 ? 26 : 24.5} Q2,23 3,20 L9,3.500 Q10,1 13,1 H189 Q192,1 193,3.500 L199,20 Q200,23 203,${i === 3 ? 26 : 24.5}Z"></path>
              <path fill="none" stroke="#999" d="M0,24.500 Q2,23 3,20 L9,3.500 Q10,1 13,1 H189 Q192,1 193,3.500 L199,20 Q200,23 203,24.500"></path></svg>
            <div class="inner"><svg width="11" height="14" viewBox="0 0 11 14">${docIcon}</svg><div class="name ${i < 3 ? "fade" : ""}"><b>${t}</b></div>
              <svg class="close" width="8" height="8" viewBox="0 0 8 8"><path stroke="#555" stroke-width="1.800" d="M1,1 L7,7 M7,1 L1,7"></path></svg></div>
          </div>`)}
        </div>
        <svg class="newtab" width="34" height="18" viewBox="0 0 34 18"><path fill="#eee" stroke="#999" d="M3,1.500 H24 Q26,1.500 27,4 L31,14 Q31,16 29,16 H9 Q7,16 6,14 L1.500,4 Q1,1.500 3,1.500Z"></path></svg>
        <div class="right">
          <svg width="25" height="18" viewBox="0 0 25 18"><path fill="#d6d6d6" stroke="#888" d="M.5,0 V13 Q.5,16.500 4,16.500 H21 Q24.500,16.500 24.500,13 V0"></path><circle cx="12.500" cy="6" r="2.800" fill="#eee" stroke="#555" stroke-width="1.300"></circle><path fill="#eee" stroke="#555" stroke-width="1.300" d="M8,12.500 Q8,9 11,9 H14 Q17,9 17,12.500Z"></path></svg>
          <svg width="24" height="18" viewBox="0 0 24 18"><rect x=".5" y=".5" width="23" height="17" rx="1.500" fill="#d2d2d2" stroke="#aaa"></rect><g fill="#ddd" stroke="#999" stroke-width="1.400"><rect x="10" y="4.500" width="7" height="6"></rect><rect x="7" y="7" width="7" height="6"></rect></g><rect x="9" y="9" width="3" height="2" fill="#fff"></rect></svg>
        </div>
      </div>
      <div class="toolbar">
        <svg class="nav" width="75" height="20" viewBox="8 0 75 20"><g fill="none" stroke-width="4"><path stroke="#4d4d4d" d="M17.500,2.500 L11.500,9 L17.500,15.500 M11.500,9 H24"></path><path stroke="#b2b2b2" d="M45.500,2.500 L51.500,9 L45.500,15.500 M51.500,9 H39"></path></g>
          <path fill="none" stroke="#4f86bb" stroke-width="4.600" d="M80,12 A6,6 0 1 1 78.500,4.500"></path><path fill="none" stroke="#8dbbe6" stroke-width="2.800" d="M80,12 A6,6 0 1 1 78.500,4.500"></path><path fill="#8dbbe6" stroke="#4f86bb" d="M82.500,1 V8.500 H75Z"></path></svg>
        <div class="omni"><svg width="12" height="16" viewBox="0 0 11 14">${docIcon}</svg><div class="url"><span><i>127.0.0.1</i>:47832/vacante.html</span></div>
          <svg width="18" height="18" viewBox="0 0 18 18"><path fill="#d0d0d0" d="M9,0 L11.500,6.200 L17.500,6.600 L13,10.800 L14.600,17 L9,13.600 L3.400,17 L5,10.800 L.5,6.600 L6.500,6.200Z"></path></svg></div>
        <svg class="burger" width="14" height="15" viewBox="0 0 14 15"><path stroke="#4a4a4a" stroke-width="3" stroke-linecap="round" d="M2,2 H12 M2,7 H12 M2,12 H12"></path></svg>
      </div>
      <div class="view">
        <div class="page">
          <h1>{{ vacante.nombre }}</h1>
          <div class="cols">
            <div>
              <h2>{{ vacante.descripcion }}</h2>
              <p>Lorem ipsum dolor sit amet, consectetur adipiscing elit. Fusce malesuada varius tincidunt. Vestibulum ante ipsum primis in faucibus orci luctus et ultrices posuere cubilia Curae; Suspendisse interdum purus ac tempus finibus. Integer ut velit nisi. Nulla lobortis ultrices magna fringilla tristique. Praesent laoreet magna lorem, id cursus lorem tempus at. Quisque suscipit egestas tellus, eu commodo sapien tincidunt eu.</p>
              <div class="rule"></div>
              <h2>{{ vacante.contacto }}</h2>
              <div class="contact">
                <ul><li>Correo:</li><li>Sitio web:</li><li>Facebook:</li><li>Twitter:</li><li>Telefono:</li></ul>
                <ul><li>ejemplo@correo.com</li><li><a>www.ejemplo.com</a></li><li><a>/Ejemplo</a></li><li><a>@ejemplo</a></li><li>5-555-555</li></ul>
              </div>
              <div class="blue"></div>
              <h2>Mapa</h2>
              <city-map></city-map>
            </div>
            <div>
              <h2>Imagenes</h2>
              <div class="slider">
                <svg width="360" height="500" viewBox="0 0 360 500">
                  <text class="size" x="100" y="271" textLength="152" lengthAdjust="spacingAndGlyphs">450 x 450</text>
                  <g fill="none" stroke="#000" stroke-opacity=".15" stroke-width="7"><path d="M32,240 L20,252.500 L32,265 M328,240 L340,252.500 L328,265"></path></g>
                  <g fill="none" stroke="#e6e6e6" stroke-width="7"><path d="M31.500,240 L19.500,251.500 L31.500,263.500 M328,240 L339.500,251.500 L328,263.500"></path></g>
                </svg>
                <div class="caption">Imagen de demo</div>
                <div class="dots"><div class="dot on"></div><div class="dot"></div><div class="dot"></div></div>
              </div>
              <h3>Listo para ayudar?</h3>
              <div class="form"><div class="select">Aplicar como:<svg width="7" height="7" viewBox="0 0 8 8"><path d="M0,.5 H8 L4,7.500Z"></path></svg></div><div class="btn">Aplicar</div></div>
            </div>
          </div>
        </div>
        <div class="bar"><svg width="9" height="12" viewBox="0 0 9 12"><path fill="#444" d="M.5,10 L4.500,6 L8.500,10Z"></path></svg><div class="thumb"></div><svg class="down" width="9" height="8" viewBox="0 0 9 8"><path fill="#444" d="M.5,1 L4.500,5 L8.500,1Z"></path></svg></div>
      </div>`;
  }
}
